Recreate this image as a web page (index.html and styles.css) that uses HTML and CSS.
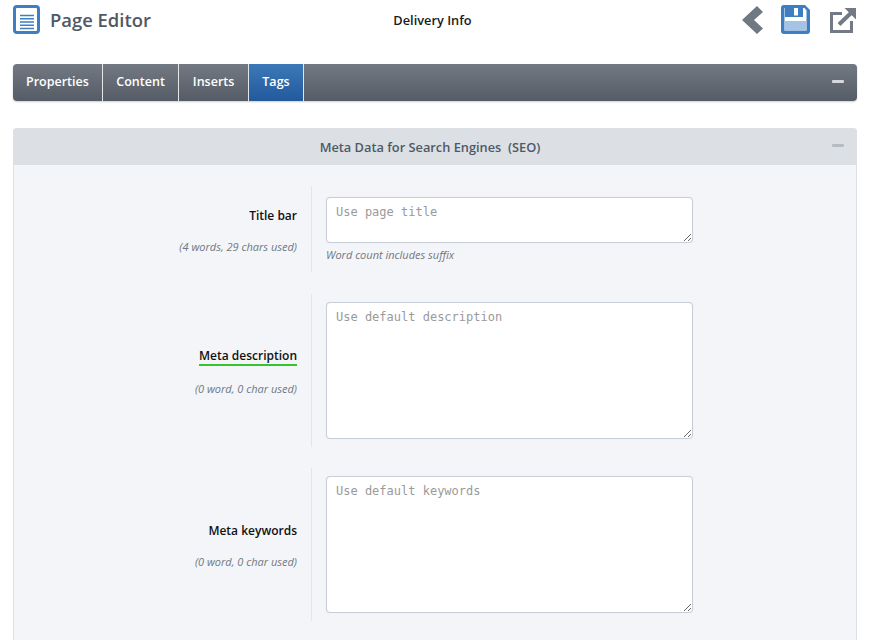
FILE: index.html
```html
<!DOCTYPE html>
<html lang="en">
<head>
<meta charset="utf-8">
<title>Page Editor</title>
<link rel="stylesheet" href="styles.css">
</head>
<body>
<div class="page">
  <header class="top">
    <div class="brand">
      <svg class="brand-icon" width="27" height="29" viewBox="0 0 27 29">
        <rect x="1.5" y="1.5" width="24" height="26" rx="2.500" fill="#fff" stroke="#3d7fc0" stroke-width="3"/>
        <path d="M7 10.500h14M7 13.800h14M7 17h14M7 20.200h14M7 23.500h14" stroke="#3d7fc0" stroke-width="1.500" fill="none"/>
      </svg>
      <h1 class="brand-title">Page Editor</h1>
    </div>
    <div class="doc-name">Delivery Info</div>
    <div class="actions">
      <svg width="22" height="30" viewBox="0 0 22 30"><path d="M16 1 L22 7 L13 15 L22 23.500 L16 29 L1 15 Z" fill="#6f7883"/></svg>
      <svg width="29" height="29" viewBox="0 0 29 29">
        <path d="M3 0H24L29 5V26a3 3 0 0 1-3 3H3a3 3 0 0 1-3-3V3A3 3 0 0 1 3 0Z" fill="#3d7fc0"/>
        <path d="M3.500 3H23.500L25.500 5.500V25.500H3.500Z" fill="#fff"/>
        <rect x="4" y="1" width="18" height="11" fill="#3d7fc0"/>
        <rect x="13" y="3" width="4" height="7.500" fill="#fff"/>
        <rect x="3.500" y="16" width="22" height="9.500" fill="#a5c3e4"/>
      </svg>
      <svg class="ext-icon" width="26" height="29" viewBox="0 0 26 29">
        <path d="M12 8.500H1.500V26.500H21.500V16" fill="none" stroke="#717a85" stroke-width="3"/>
        <path d="M9 19.500L21 8" stroke="#717a85" stroke-width="4" fill="none"/>
        <path d="M14.500 3H26V14.500Z" fill="#717a85"/>
      </svg>
    </div>
  </header>

  <nav class="tabbar">
    <a class="tab tab-first">Properties</a>
    <a class="tab">Content</a>
    <a class="tab">Inserts</a>
    <a class="tab tab-active">Tags</a>
    <span class="collapse collapse-light"></span>
  </nav>

  <section class="panel">
    <div class="panel-head">
      <h2 class="panel-title">Meta Data for Search Engines&nbsp; (SEO)</h2>
      <span class="collapse collapse-dim"></span>
    </div>
    <div class="panel-body">
      <div class="row row-title">
        <div class="label-col">
          <label class="label">Title bar</label>
          <div class="count">(4 words, 29 chars used)</div>
        </div>
        <div class="field-col">
          <textarea class="input input-short" placeholder="Use page title"></textarea>
          <div class="hint">Word count includes suffix</div>
        </div>
      </div>
      <div class="row">
        <div class="label-col">
          <label class="label label-good">Meta description</label>
          <div class="count">(0 word, 0 char used)</div>
        </div>
        <div class="field-col">
          <textarea class="input input-tall" placeholder="Use default description"></textarea>
        </div>
      </div>
      <div class="row">
        <div class="label-col">
          <label class="label">Meta keywords</label>
          <div class="count">(0 word, 0 char used)</div>
        </div>
        <div class="field-col">
          <textarea class="input input-tall" placeholder="Use default keywords"></textarea>
        </div>
      </div>
    </div>
  </section>
</div>
</body>
</html>
```

FILE: styles.css
```css
* { box-sizing: border-box; }
html, body { margin: 0; height: 640px; overflow: hidden; background: #fff; }
body { font-family: "Open Sans", "Liberation Sans", sans-serif; color: #111; }
.page { padding: 0 13px; }

.top { height: 64px; display: grid; grid-template-columns: 1fr auto 1fr; align-items: start; }
.brand { display: flex; align-items: center; gap: 10px; padding-top: 5px; }
.brand-title { margin: 0; font-size: 18.400px; font-weight: 600; color: #4f5966; line-height: 28px; }
.doc-name { font-size: 12.800px; font-weight: 600; color: #1a1a1a; line-height: 18px; padding: 11px 5px 0 0; }
.actions { display: flex; justify-content: flex-end; align-items: flex-start; gap: 18px; padding: 5px 1px 0 0; }
.ext-icon { margin-left: 2px; }

.tabbar { height: 37px; display: flex; align-items: stretch; position: relative; border-radius: 4px; background: linear-gradient(#727983, #565c65); box-shadow: 0 1px 2px rgba(0,0,0,.2); }
.tab { display: flex; align-items: center; padding: 0 13.500px 2px; font-size: 12.500px; font-weight: 600; color: #fff; border-right: 1px solid #e4e7ea; }
.tab-first { padding: 0 13px 2px; border-radius: 4px 0 0 4px; }
.tab-active { background: linear-gradient(#3c78b8, #225a9c); }
.collapse { position: absolute; right: 13px; width: 12px; height: 3px; border-radius: 1px; }
.collapse-light { top: 16px; background: #d4d7db; }
.collapse-dim { top: 16px; background: #b7bcc3; }

.panel { margin-top: 27px; border: 1px solid #dde1e6; border-top: 0; border-bottom: 0; border-radius: 4px 4px 0 0; background: #f4f5f8; }
.panel-head { height: 37px; margin: 0 -1px; padding-right: 10px; position: relative; display: flex; align-items: center; justify-content: center; background: #dce0e4; border-radius: 4px 4px 0 0; }
.panel-title { margin: 0; font-size: 12.800px; font-weight: 600; color: #4f5966; }
.panel-body { padding: 21px 0 40px; display: flex; flex-direction: column; gap: 21px; }

.row { display: flex; }
.row-title { margin-bottom: 1px; }
.label-col { width: 297px; padding: 2px 14px 0 0; display: flex; flex-direction: column; justify-content: center; align-items: flex-end; gap: 15px; }
.row-title .label-col { padding-top: 4px; }
.label { font-size: 12px; font-weight: 600; line-height: 17px; color: #111; }
.label-good { border-bottom: 2px solid #35c42f; }
.count { font-size: 11px; font-style: italic; color: #6f7884; line-height: 16px; }
.field-col { padding: 8px 0 8px 14px; border-left: 1px solid #e2e5e9; }
.row-title .field-col { padding-top: 11px; padding-bottom: 0; height: 86px; }
.input { display: block; width: 367px; padding: 7px 9px; font-family: "DejaVu Sans Mono", monospace; font-size: 12px; line-height: 14px; background: #fff; border: 1px solid #c8ced8; border-radius: 4px; box-shadow: 0 0 1px #d8dce3; outline: 0; margin: 0; }
.input::placeholder { color: #9a9a9a; opacity: 1; }
.input-short { height: 46px; }
.input-tall { height: 137px; }
.hint { font-size: 11px; font-style: italic; color: #6f7884; line-height: 16px; margin-top: 4px; }
```
